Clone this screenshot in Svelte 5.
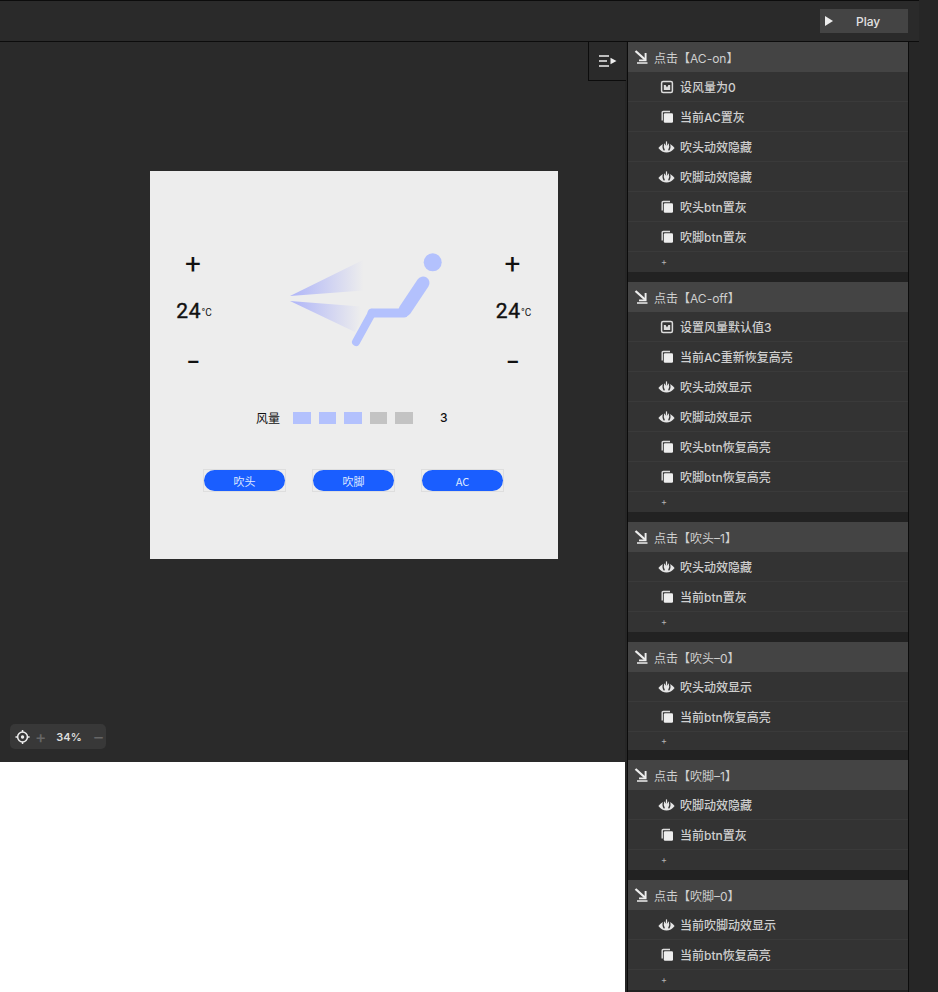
<script lang="ts">
  type RowIcon = "image" | "copy" | "eye";

  interface Group {
    readonly title: string;
    readonly rows: ReadonlyArray<readonly [RowIcon, string]>;
    readonly short?: boolean;
  }

  const groups: ReadonlyArray<Group> = [
    {
      title: "点击【AC-on】",
      rows: [
        ["image", "设风量为0"],
        ["copy", "当前AC置灰"],
        ["eye", "吹头动效隐藏"],
        ["eye", "吹脚动效隐藏"],
        ["copy", "吹头btn置灰"],
        ["copy", "吹脚btn置灰"],
      ],
    },
    {
      title: "点击【AC-off】",
      rows: [
        ["image", "设置风量默认值3"],
        ["copy", "当前AC重新恢复高亮"],
        ["eye", "吹头动效显示"],
        ["eye", "吹脚动效显示"],
        ["copy", "吹头btn恢复高亮"],
        ["copy", "吹脚btn恢复高亮"],
      ],
    },
    {
      title: "点击【吹头–1】",
      rows: [
        ["eye", "吹头动效隐藏"],
        ["copy", "当前btn置灰"],
      ],
    },
    {
      title: "点击【吹头–0】",
      rows: [
        ["eye", "吹头动效显示"],
        ["copy", "当前btn恢复高亮"],
      ],
      short: true,
    },
    {
      title: "点击【吹脚–1】",
      rows: [
        ["eye", "吹脚动效隐藏"],
        ["copy", "当前btn置灰"],
      ],
    },
    {
      title: "点击【吹脚–0】",
      rows: [
        ["eye", "当前吹脚动效显示"],
        ["copy", "当前btn恢复高亮"],
      ],
    },
  ];

  const levels = [true, true, true, false, false];
  const buttons = ["吹头", "吹脚", "AC"];
</script>

{#snippet tempControl()}
  <div class="temp">
    <span class="step">+</span>
    <span class="value">24<small>°C</small></span>
    <span class="step minus">–</span>
  </div>
{/snippet}

{#snippet rowIcon(kind: RowIcon)}
  {#if kind === "image"}
    <svg viewBox="0 0 14 14" width="14" height="14">
      <rect x="1.6" y="1.6" width="10.8" height="10.8" rx="1.5" fill="none" stroke="#ddd" stroke-width="1.5" />
      <path d="M3.8 10 V5 H5.6 L7 7.4 L8.4 5 H10.2 V10 Z" fill="#ddd" />
    </svg>
  {:else if kind === "copy"}
    <svg viewBox="0 0 14 14" width="14" height="14">
      <path d="M2.2 10.5 V2.6 Q2.2 1.5 3.3 1.5 H10" fill="none" stroke="#ddd" stroke-width="1.4" />
      <rect x="3.8" y="3.2" width="9.2" height="9.6" rx="1.2" fill="#eee" />
    </svg>
  {:else}
    <svg viewBox="0 0 17 12" width="17" height="12">
      <path d="M0.4 7 Q4 2.6 8.5 2.6 Q13 2.6 16.6 7 Q13 11.6 8.5 11.6 Q4 11.6 0.4 7 Z" fill="#e6e6e6" />
      <path d="M5.6 3 Q4.2 6.6 6.4 9.4 M11.4 3 Q12.8 6.6 10.6 9.4" fill="none" stroke="#333" stroke-width="1.2" />
      <path d="M8.5 0.2 V4.2" stroke="#333" stroke-width="2.6" fill="none" />
      <path d="M8.5 0.4 V4.4" stroke="#e6e6e6" stroke-width="1.2" fill="none" />
    </svg>
  {/if}
{/snippet}

<div class="page">
  <header class="topbar">
    <div class="topbar-inner">
      <button type="button" class="play">
        <svg viewBox="0 0 8 10" width="8" height="10"><path d="M0 0 L8 5 L0 10 Z" fill="#eee" /></svg>
        <span>Play</span>
      </button>
    </div>
  </header>

  <div class="body">
    <main class="stage">
      <div class="canvas">
        <section class="frame">
          <div class="climate">
            {@render tempControl()}
            <svg class="figure" viewBox="0 0 170 110" width="170" height="110">
              <defs>
                <linearGradient id="air" x1="0" y1="0" x2="1" y2="0">
                  <stop offset="0" stop-color="#aeb4f8" />
                  <stop offset="0.92" stop-color="#aeb4f8" stop-opacity="0" />
                </linearGradient>
              </defs>
              <path d="M10 51 L83 15 L90 45 Z" fill="url(#air)" />
              <path d="M10 56 L87 62 L75 87 Z" fill="url(#air)" />
              <circle cx="152.7" cy="17.3" r="9" fill="#b3c1fd" />
              <g fill="none" stroke="#b3c1fd" stroke-linecap="round" stroke-linejoin="round">
                <path d="M143 38 L125 65" stroke-width="13" />
                <path d="M124 68 L92 68" stroke-width="9" />
                <path d="M92 68 L76 97" stroke-width="8" />
              </g>
            </svg>
            {@render tempControl()}
          </div>

          <div class="wind">
            <span class="wind-label">风量</span>
            <div class="levels">
              {#each levels as on}
                <i class="level" class:on></i>
              {/each}
            </div>
            <span class="wind-value">3</span>
          </div>

          <div class="buttons">
            {#each buttons as label}
              <div class="hotspot"><button type="button" class="pill">{label}</button></div>
            {/each}
          </div>
        </section>

        <div class="zoom">
          <svg viewBox="0 0 16 16" width="16" height="16">
            <circle cx="8" cy="8" r="5.2" fill="none" stroke="#eee" stroke-width="1.6" />
            <circle cx="8" cy="8" r="1.8" fill="#eee" />
            <path d="M8 0.5 V3 M8 13 V15.5 M0.5 8 H3 M13 8 H15.5" stroke="#eee" stroke-width="1.6" />
          </svg>
          <span class="zoom-step">+</span>
          <span class="zoom-value">34%</span>
          <span class="zoom-step">–</span>
        </div>
      </div>
    </main>

    <aside class="side">
      <div class="tab">
        <svg viewBox="0 0 18 12" width="18" height="12">
          <path d="M0 1 H10 M0 6 H8 M0 11 H10" stroke="#eee" stroke-width="1.5" />
          <path d="M11.5 2.8 L17.5 6 L11.5 9.2 Z" fill="#eee" />
        </svg>
      </div>

      <div class="panel">
        {#each groups as group}
          <section class="group" class:short={group.short}>
            <h3 class="group-title">
              <svg viewBox="0 0 14 14" width="14" height="14">
                <path d="M1.5 1 L11 9.5" fill="none" stroke="#eee" stroke-width="2.3" />
                <path d="M11.6 3 V10.4 H5" fill="none" stroke="#eee" stroke-width="1.9" />
                <path d="M3 13 H13.5" fill="none" stroke="#eee" stroke-width="1.5" />
              </svg>
              <span>{group.title}</span>
            </h3>
            {#each group.rows as [icon, label]}
              <div class="row">
                <span class="row-icon">{@render rowIcon(icon)}</span>
                <span>{label}</span>
              </div>
            {/each}
            <div class="add">+</div>
          </section>
        {/each}
      </div>
    </aside>
  </div>
</div>

<style>
  :global(body) {
    margin: 0;
    background: #fff;
  }

  .page {
    width: 938px;
    height: 992px;
    overflow: hidden;
    display: flex;
    flex-direction: column;
    font-family: "Inter", "Noto Sans CJK SC", sans-serif;
    -webkit-font-smoothing: antialiased;
  }

  .topbar {
    height: 42px;
    flex: none;
    background: #262626;
  }

  .topbar-inner {
    width: 919px;
    height: 42px;
    box-sizing: border-box;
    background: #2a2a2a;
    border-top: 1px solid #0c0c0c;
    border-bottom: 1px solid #0c0c0c;
    display: flex;
    justify-content: flex-end;
    padding: 8px 11px 0 0;
  }

  .play {
    width: 88px;
    height: 24px;
    border: 0;
    padding: 0 0 0 5px;
    background: #444;
    color: #e2e2e2;
    display: flex;
    align-items: center;
    gap: 23px;
    font: 500 12px "Inter", sans-serif;
  }

  .body {
    flex: 1;
    display: flex;
    min-height: 0;
  }

  .stage {
    width: 625px;
    flex: none;
  }

  .canvas {
    position: relative;
    height: 720px;
    box-sizing: border-box;
    padding: 129px 0 0 150px;
    background: #2a2a2a;
  }

  .frame {
    width: 407.5px;
    height: 388px;
    box-sizing: border-box;
    padding-top: 74px;
    background: #ededed;
    color: #111;
  }

  .climate {
    display: grid;
    grid-template-columns: 86px 233px 87px;
    height: 132px;
  }

  .figure {
    margin-left: 44px;
    display: block;
  }

  .temp {
    display: flex;
    flex-direction: column;
    align-items: center;
    padding-top: 5px;
  }

  .step {
    height: 28px;
    font: 400 28px/28px "Roboto", sans-serif;
  }

  .step.minus {
    margin-top: 25px;
    font-size: 20px;
    font-weight: 700;
  }

  .value {
    height: 24px;
    margin-top: 21px;
    margin-left: 2px;
    letter-spacing: 0.8px;
    font: 400 21px/24px "Roboto", sans-serif;
    -webkit-text-stroke: 0.4px #111;
  }

  .value small {
    font-size: 10px;
    font-weight: 400;
    letter-spacing: 0;
    vertical-align: 2px;
    -webkit-text-stroke: 0;
  }

  .wind {
    margin-top: 34px;
    padding-left: 106px;
    height: 13px;
    display: flex;
    align-items: center;
    font-size: 12px;
  }

  .wind-label {
    width: 25px;
    margin-right: 12px;
  }

  .levels {
    display: flex;
    gap: 8px;
  }

  .level {
    width: 17.6px;
    height: 12px;
    background: #c3c3c3;
  }

  .level.on {
    background: #b3c1fd;
  }

  .wind-value {
    margin-left: 27px;
    margin-top: -1px;
    font-size: 12px;
    font-weight: 500;
  }

  .buttons {
    margin-top: 45px;
    padding-left: 53px;
    display: flex;
    gap: 26px;
  }

  .hotspot {
    width: 83px;
    height: 23px;
    box-sizing: border-box;
    border: 1px solid #dedede;
  }

  .pill {
    display: block;
    width: 100%;
    height: 100%;
    border: 0;
    padding: 0;
    border-radius: 11px;
    background: #1a5eff;
    color: #dfe8ff;
    font: 400 11px "Noto Sans CJK SC", "Inter", sans-serif;
  }

  .zoom {
    position: absolute;
    left: 10px;
    top: 682px;
    width: 96px;
    height: 25px;
    box-sizing: border-box;
    padding-left: 5px;
    border-radius: 5px;
    background: #383838;
    display: flex;
    align-items: center;
    color: #ddd;
  }

  .zoom-step {
    width: 16px;
    margin-left: 3px;
    text-align: center;
    color: #666;
    font: 500 17px "Inter", sans-serif;
  }

  .zoom-value {
    width: 40px;
    margin: 0 0 0 2px;
    text-align: center;
    font: 600 11px "Inter", sans-serif;
  }

  .side {
    position: relative;
    flex: 1;
    background: #262626;
    padding-left: 2px;
  }

  .tab {
    position: absolute;
    left: -37px;
    top: 0;
    width: 38px;
    height: 39px;
    box-sizing: border-box;
    border-left: 1px solid #0c0c0c;
    border-bottom: 1px solid #0c0c0c;
    background: #2a2a2a;
    display: flex;
    align-items: center;
    justify-content: center;
  }

  .panel {
    position: relative;
    width: 282px;
    height: 950px;
    box-sizing: border-box;
    background: #222;
    border-left: 1px solid #0c0c0c;
    border-right: 1px solid #0c0c0c;
    display: flex;
    flex-direction: column;
    gap: 10px;
    font-size: 12px;
    color: #cfcfcf;
  }

  .group {
    background: #333;
  }

  .group-title {
    margin: 0;
    height: 30px;
    box-sizing: border-box;
    padding-left: 6px;
    background: #444;
    display: flex;
    align-items: center;
    gap: 6px;
    font-size: 12px;
    font-weight: 400;
  }

  .row {
    height: 30px;
    box-sizing: border-box;
    padding-left: 30px;
    border-bottom: 1px solid #3a3a3a;
    display: flex;
    align-items: center;
    gap: 5px;
    font-weight: 500;
  }

  .row-icon {
    width: 17px;
    display: flex;
    justify-content: center;
  }

  .add {
    height: 20px;
    padding-left: 33px;
    font-size: 9px;
    line-height: 20px;
    color: #b5b5b5;
  }

  .group.short .add {
    height: 18px;
    line-height: 18px;
  }
</style>
